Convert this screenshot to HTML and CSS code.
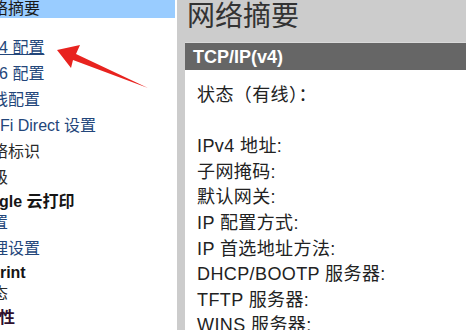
FILE: index.html
```html
<!DOCTYPE html>
<html lang="zh-CN">
<head>
    <meta charset="UTF-8">
    <title>网络摘要</title>
    <link rel="stylesheet" href="styles.css">
</head>
<body>
    <div class="sideNav">
        <div class="navList">
            <div class="navItem selected">网络摘要</div>
            <div class="navItem first"><a href="#" class="hovered">IPv4 配置</a></div>
            <div class="navItem"><a href="#">IPv6 配置</a></div>
            <div class="navItem"><a href="#">无线配置</a></div>
            <div class="navItem"><a href="#">Wi-Fi Direct 设置</a></div>
            <div class="navItem plain">网络标识</div>
            <div class="navItem plain">高级</div>
            <div class="navHeader">Google 云打印</div>
            <div class="navItem"><a href="#">设置</a></div>
            <div class="navItem"><a href="#">代理设置</a></div>
            <div class="navHeader">AirPrint</div>
            <div class="navItem plain">状态</div>
            <div class="navHeader visited">安全性</div>
        </div>
    </div>

    <div class="mainArea">
        <h1 class="pageTitle">网络摘要</h1>
        <div class="section">
            <div class="sectionHead">TCP/IP(v4)</div>
            <div class="sectionBody">
                <div class="row">状态（有线）：</div>
                <div class="row"></div>
                <div class="row">IPv4 地址:</div>
                <div class="row">子网掩码:</div>
                <div class="row">默认网关:</div>
                <div class="row">IP 配置方式:</div>
                <div class="row">IP 首选地址方法:</div>
                <div class="row">DHCP/BOOTP 服务器:</div>
                <div class="row">TFTP 服务器:</div>
                <div class="row">WINS 服务器:</div>
            </div>
        </div>
    </div>

    <!-- 红色标注箭头 -->
    <svg class="markArrow" width="466" height="330" viewBox="0 0 466 330">
        <polygon points="57,50 80,45 76,54 148,88 73,60 71,68" fill="#e8231f"/>
    </svg>
</body>
</html>
```

FILE: styles.css
```css
body {
    margin: 0;
    height: 330px;
    overflow: hidden;
    display: flex;
    background: #fff;
    font-family: "Liberation Sans", "Noto Sans CJK SC", sans-serif;
}

/* 左侧导航 */
.sideNav {
    width: 177px;
    flex-shrink: 0;
    overflow: hidden;
    background: #fff;
}
.navList {
    margin-left: -40px;
    font-size: 16px;
}
.navItem {
    height: 26px;
    line-height: 26px;
    padding-left: 16px;
    white-space: nowrap;
}
.navItem a {
    color: #23467a;
    text-decoration: none;
}
.navItem a.hovered {
    text-decoration: underline;
}
.navItem.plain {
    color: #2a2a2a;
}
.navItem.selected {
    height: 18px;
    line-height: 17px;
    width: 199px;
    background: #9cf;
    color: #1a1a1a;
}
.navItem.first {
    margin-top: 17px;
}
.navHeader {
    height: 19px;
    line-height: 22px;
    padding-left: 7px;
    font-weight: bold;
    color: #151515;
    white-space: nowrap;
}
.navHeader.visited {
    color: #2e0f2e;
}

/* 右侧内容 */
.mainArea {
    flex: 1;
    display: flex;
    flex-direction: column;
    background: #ccc;
    padding-left: 8px;
}
.pageTitle {
    margin: 0;
    height: 42px;
    padding-left: 2px;
    font-size: 28px;
    line-height: 34px;
    font-weight: normal;
    color: #333;
}
.section {
    flex: 1;
    display: flex;
    flex-direction: column;
    min-height: 0;
    border-top: 1px solid #d9d9d9;
}
.sectionHead {
    height: 27px;
    line-height: 28px;
    padding-left: 8px;
    background: #666;
    color: #fff;
    font-size: 18px;
    font-weight: bold;
}
.sectionBody {
    flex: 1;
    min-height: 0;
    overflow: hidden;
    background: #fff;
    padding-top: 13px;
    padding-left: 12px;
    font-size: 18px;
    color: #222;
}
.row {
    height: 25.6px;
    line-height: 25.6px;
    white-space: nowrap;
    letter-spacing: 0.4px;
}

/* 标注 */
.markArrow {
    position: absolute;
    left: 0;
    top: 0;
    pointer-events: none;
}
```
